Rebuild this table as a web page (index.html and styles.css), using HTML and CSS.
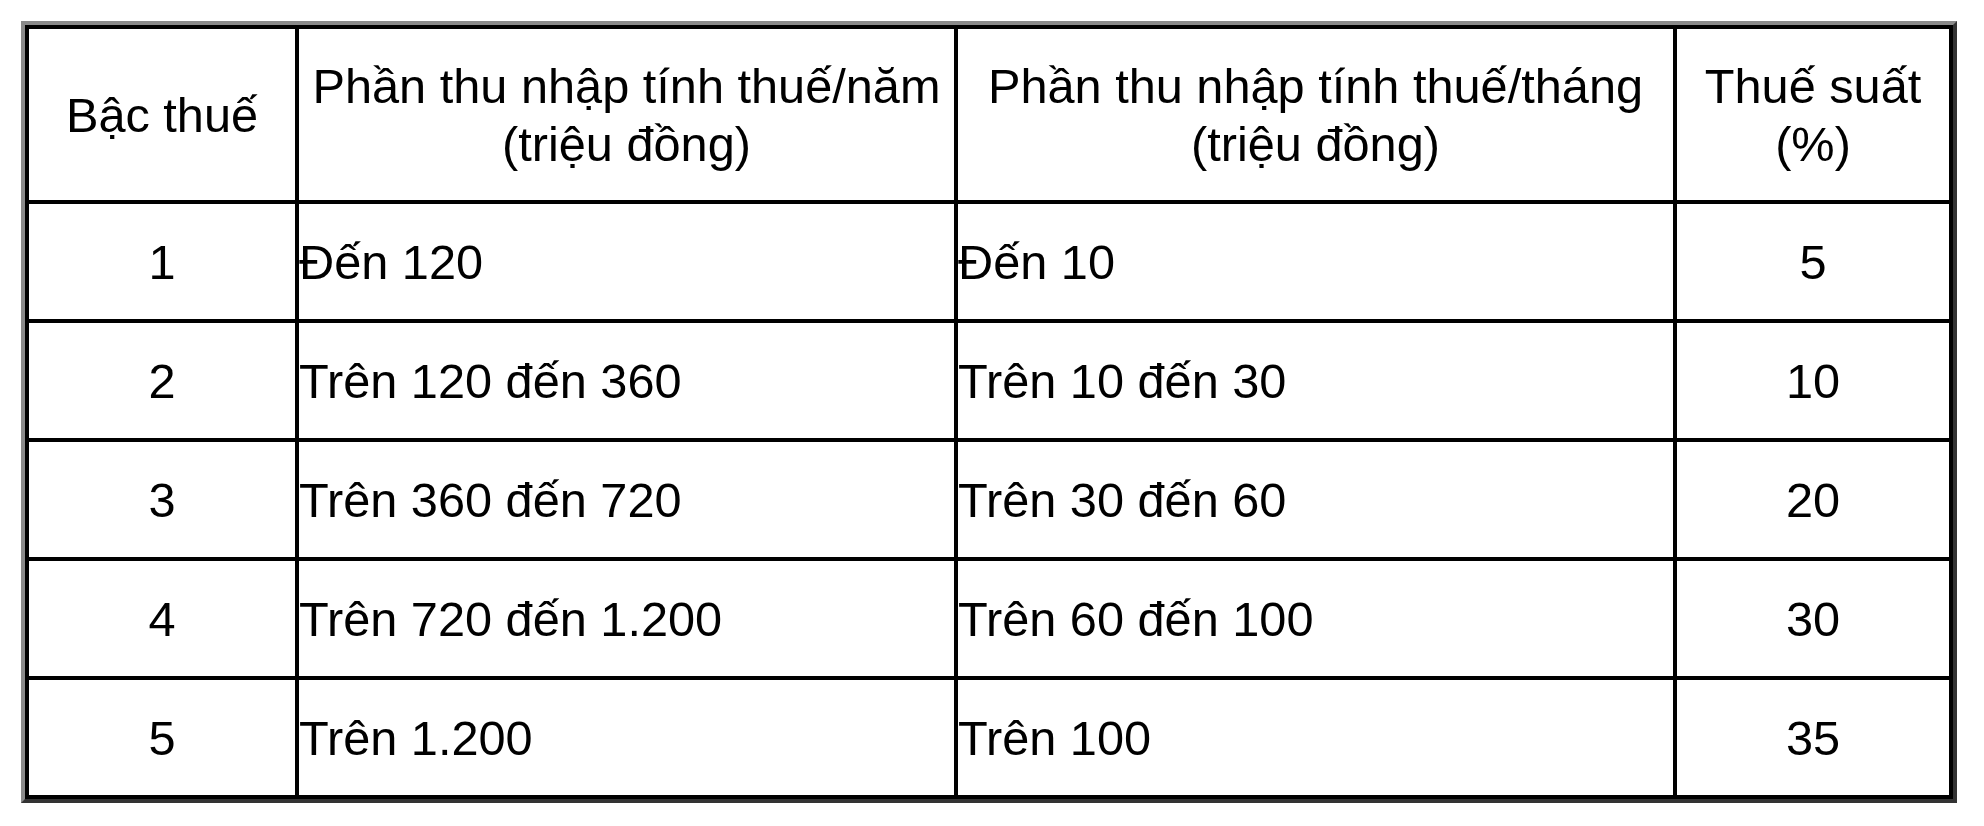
FILE: index.html
```html
<!DOCTYPE html>
<html lang="vi">
<head>
<meta charset="utf-8">
<title>Biểu thuế lũy tiến từng phần</title>
<link rel="stylesheet" href="styles.css">
</head>
<body>
<div class="frame">
  <div class="tax-grid">
    <div class="cell center">Bậc thuế</div>
    <div class="cell center">Phần thu nhập tính thuế/năm<br>(triệu đồng)</div>
    <div class="cell center">Phần thu nhập tính thuế/tháng<br>(triệu đồng)</div>
    <div class="cell center">Thuế suất<br>(%)</div>

    <div class="cell center">1</div>
    <div class="cell left">Đến 120</div>
    <div class="cell left">Đến 10</div>
    <div class="cell center">5</div>

    <div class="cell center">2</div>
    <div class="cell left">Trên 120 đến 360</div>
    <div class="cell left">Trên 10 đến 30</div>
    <div class="cell center">10</div>

    <div class="cell center">3</div>
    <div class="cell left">Trên 360 đến 720</div>
    <div class="cell left">Trên 30 đến 60</div>
    <div class="cell center">20</div>

    <div class="cell center">4</div>
    <div class="cell left">Trên 720 đến 1.200</div>
    <div class="cell left">Trên 60 đến 100</div>
    <div class="cell center">30</div>

    <div class="cell center">5</div>
    <div class="cell left">Trên 1.200</div>
    <div class="cell left">Trên 100</div>
    <div class="cell center">35</div>
  </div>
</div>
</body>
</html>
```
FILE: styles.css
```css
html, body {
  margin: 0;
  padding: 0;
  background: #ffffff;
}

body {
  padding: 21px;
  font-family: "Liberation Sans", Arial, sans-serif;
  color: #000000;
}

.frame {
  width: 1928px;
  border-style: solid;
  border-width: 4px;
  border-color: #8a8a8a #333333 #333333 #8a8a8a;
}

.tax-grid {
  display: grid;
  grid-template-columns: 266px 655px 715px 272px;
  grid-template-rows: 171px repeat(5, 115px);
  gap: 4px;
  padding: 4px;
  background: #000000;
}

.cell {
  background: #ffffff;
  display: flex;
  align-items: center;
  font-size: 48.7px;
  line-height: 58px;
}

.center {
  justify-content: center;
  text-align: center;
}

.left {
  justify-content: flex-start;
  text-align: left;
  padding-left: 0;
}
```
